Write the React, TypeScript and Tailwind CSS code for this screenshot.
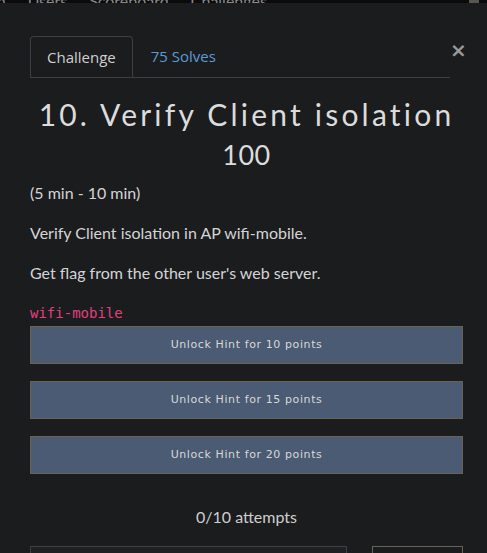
import React from 'react';

const hints = [10, 15, 20];

const App: React.FC = () => {
  return (
    <div className="relative w-[487px] h-[553px] overflow-hidden bg-[#0b0b0c]">
      {/* page behind the modal, mostly hidden */}
      <div className="absolute left-0 top-[-11px] flex gap-[22px] text-[16px] text-[#8a8a8a] font-['Lato',sans-serif]">
        <span className="-ml-[24px]">Sign</span>
        <span>Users</span>
        <span>Scoreboard</span>
        <span>Challenges</span>
      </div>
      <div className="absolute right-[8px] top-[-6px] w-[10px] h-[9px] bg-[#5a5650]" />

      <div className="absolute left-0 right-0 top-[3px] bottom-0 bg-[#1b1c1e] pl-[30px] pr-[24px] pt-[33px] font-['Lato',sans-serif] text-[#d4d4d4]">
        <div className="flex items-start">
          <div className="flex flex-1 border-b border-[#3e3f42] font-['Open_Sans',sans-serif] text-[15px]">
            <div className="h-[41px] px-[16px] flex items-center border border-[#3e3f42] border-b-0 rounded-t-[4px] -mb-px bg-[#1b1c1e] text-[#cfcfcf]">
              Challenge
            </div>
            <div className="h-[41px] px-[18px] flex items-center text-[#5b9bd5]">75 Solves</div>
          </div>
          <span className="w-[13px] text-center text-[20px] leading-none mt-[4px] text-[#9a9a9a] font-['DejaVu_Sans',sans-serif] font-bold">
            ×
          </span>
        </div>

        <h1 className="mt-[18px] text-center text-[30px] leading-[36px] tracking-[3.2px] text-[#dcdcdc]">
          10. Verify Client isolation
        </h1>
        <div className="mt-[6px] text-center text-[27px] leading-[34px] tracking-[0.5px] text-[#dcdcdc]">100</div>

        <p className="mt-[9px] text-[16px] leading-[24px]">(5 min - 10 min)</p>
        <p className="mt-[16px] text-[16px] leading-[24px]">Verify Client isolation in AP wifi-mobile.</p>
        <p className="mt-[16px] text-[16px] leading-[24px]">Get flag from the other user's web server.</p>

        <div className="mt-[20px] font-['DejaVu_Sans_Mono',monospace] text-[14px] leading-[16px] text-[#e0407e]">
          wifi-mobile
        </div>

        <div className="mt-[5px] flex flex-col gap-[17px]">
          {hints.map((p) => (
            <button
              key={p}
              className="h-[38px] w-full bg-[#4a5b73] border border-[#6a6352] text-[#d8d8d8] text-[11px] tracking-[0.6px] font-['DejaVu_Sans',sans-serif]"
            >
              Unlock Hint for {p} points
            </button>
          ))}
        </div>

        <div className="mt-[31px] text-center text-[16px] leading-[24px] text-[#cfcfcf]">0/10 attempts</div>

        <div className="mt-[17px] flex gap-[25px]">
          <div className="flex-1 h-[38px] border border-[#3e4043] bg-[#1e2022]" />
          <div className="w-[91px] h-[38px] border border-[#6a6352]" />
        </div>
      </div>
    </div>
  );
};

export default App;
